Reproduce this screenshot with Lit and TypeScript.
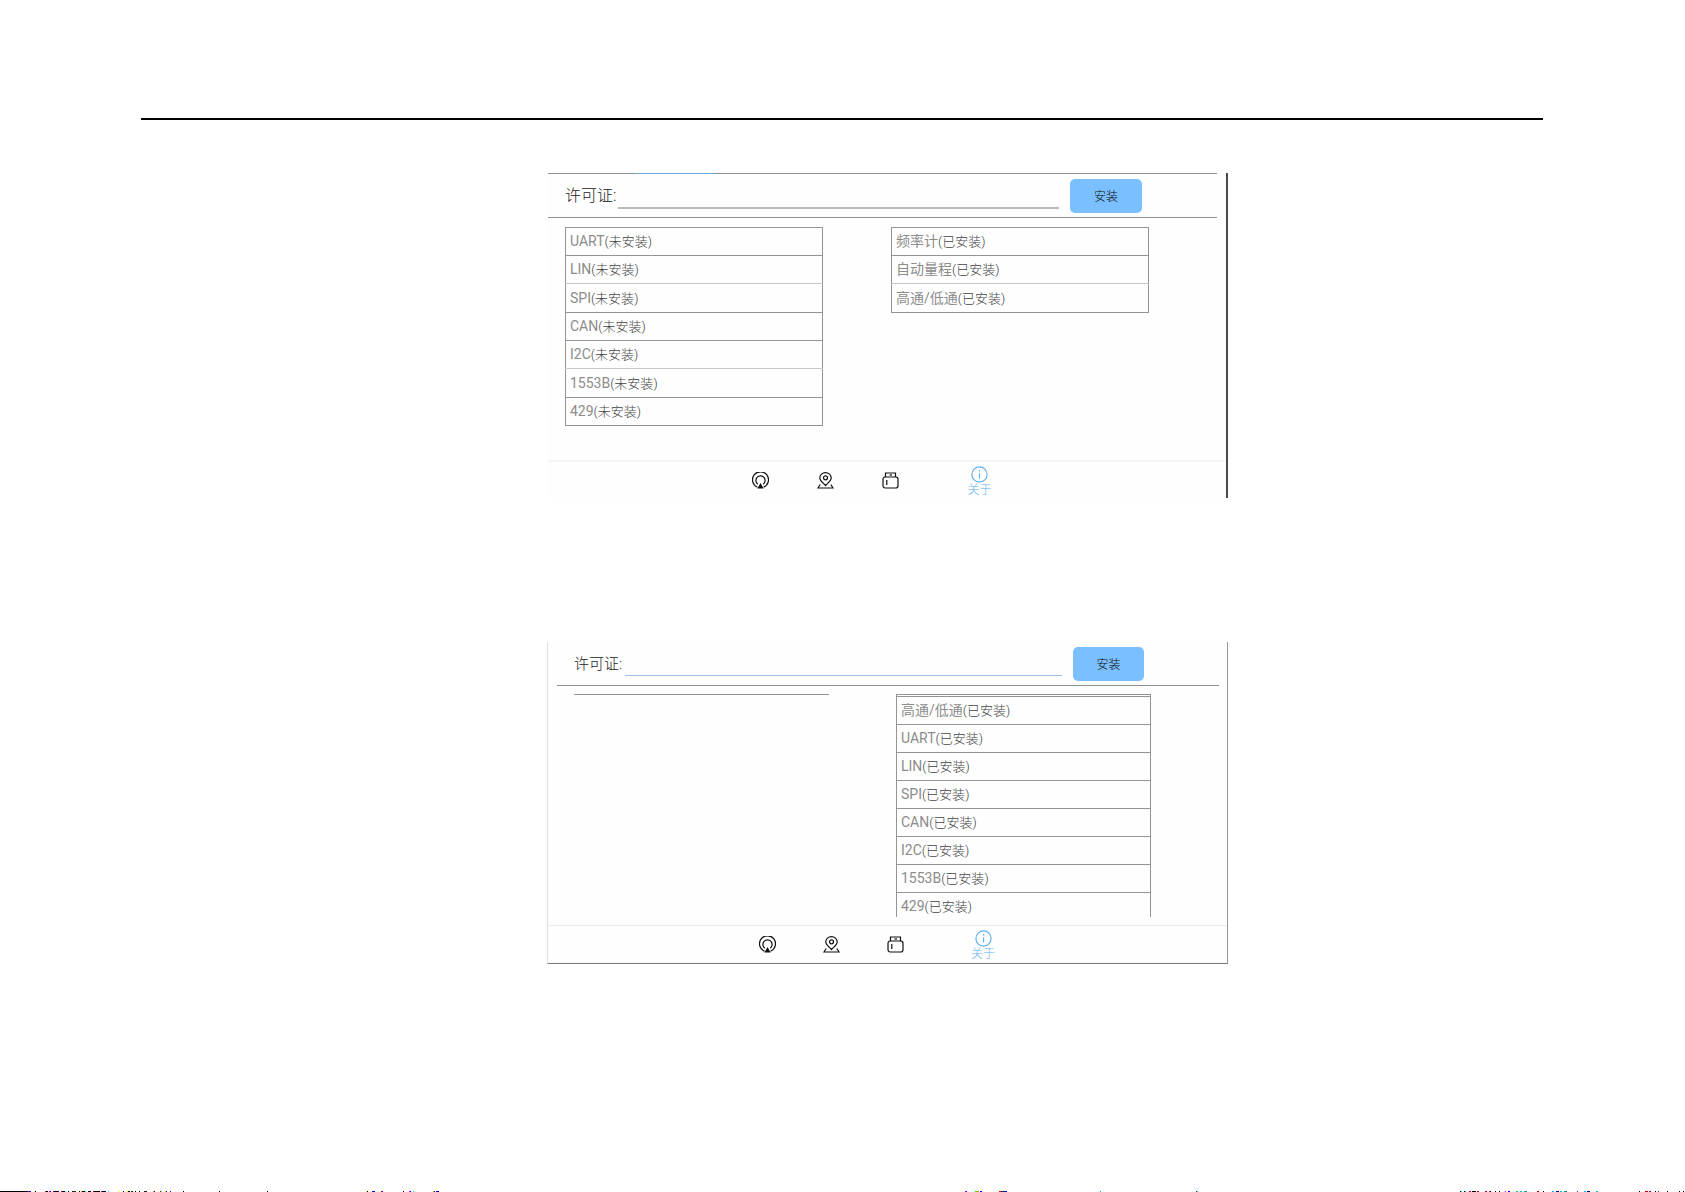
import { LitElement, html, svg, css } from "lit";
import { customElement, property } from "lit/decorators.js";
import { classMap } from "lit/directives/class-map.js";

type Item = { name: string; status: string };

const items = (names: string[], status: string): Item[] =>
  names.map((name) => ({ name, status }));

const BUSES = ["UART", "LIN", "SPI", "CAN", "I2C", "1553B", "429"];

const NAV_ICONS = [
  {
    label: "AirPlay",
    art: svg`<path d="M5.5 15.2A8 8 0 1 1 11.5 15.2" /><path d="M5.8 12.2A4.6 4.6 0 1 1 11.2 12.2" /><path d="M8.5 11 L11.6 16.5 H5.4Z" fill="currentColor" stroke="none" />`,
  },
  {
    label: "位置",
    art: svg`<path d="M8.5 13.5C6 10.8 2.8 8.6 2.8 5.9A5.6 5.2 0 0 1 14.2 5.9C14.2 8.6 11 10.8 8.5 13.5Z" /><circle cx="8.5" cy="5.8" r="2" /><path d="M3.2 12.5 L1 16 H16 L13.8 12.5" />`,
  },
  {
    label: "存储",
    art: svg`<path d="M3.5 5V1H13.5V5" /><path d="M7.5 3H10" /><rect x="1" y="5" width="15" height="11" rx="2.2" /><path d="M4.8 8V13" />`,
  },
];

@customElement("license-list")
class LicenseList extends LitElement {
  @property({ attribute: false }) items: Item[] = [];
  @property({ attribute: false }) faint: number[] = [];

  static styles = css`
    :host {
      display: block;
    }
    .list {
      width: 100%;
      border-collapse: collapse;
    }
    .cell {
      box-sizing: border-box;
      height: 28px;
      padding: 0 0 0 4px;
      border: 1px solid #949494;
      font: 14px/26px Roboto, "Noto Sans CJK SC", sans-serif;
      white-space: nowrap;
    }
    .faint .cell {
      border-bottom-color: #c8c8c8;
    }
    .after-faint .cell {
      border-top-color: #c8c8c8;
    }
    .tall .cell {
      height: 29px;
    }
    .name {
      color: #8c8c8c;
    }
    .status {
      font-size: 13px;
      font-weight: 300;
      color: #444;
    }
  `;

  render() {
    return html`<table class="list" aria-label="许可证">
      <tbody>
        ${this.items.map(
          (item, i) => html`<tr
            class=${classMap({
              faint: this.faint.includes(i),
              "after-faint": this.faint.includes(i - 1),
              tall: this.faint.includes(i - 1),
            })}
          >
            <td class="cell"><span class="name">${item.name}</span><span class="status">(${item.status})</span></td>
          </tr>`
        )}
      </tbody>
    </table>`;
  }
}

@customElement("license-panel")
class LicensePanel extends LitElement {
  @property({ reflect: true }) variant: "pending" | "installed" = "pending";
  @property({ attribute: false }) left: Item[] = [];
  @property({ attribute: false }) right: Item[] = [];

  static styles = css`
    :host {
      display: block;
    }
    :host([variant="installed"]) {
      margin-left: -1px;
    }
    .panel {
      box-sizing: border-box;
      background: #fefefe;
      font-family: Roboto, "Noto Sans CJK SC", sans-serif;
    }
    .pending {
      border-right: 2px solid #4b4b4b;
    }
    .installed {
      border: solid #999;
      border-width: 0 1px 1px;
      border-left-color: #e0e0e0;
      border-bottom-color: #777;
    }
    .bar {
      box-sizing: border-box;
      display: flex;
      align-items: flex-start;
      border-bottom: 1px solid #8f8f8f;
    }
    .pending .bar {
      height: 45px;
      margin-right: 9px;
      padding: 6px 75px 0 17px;
      background:
        linear-gradient(#6fa8dc, #6fa8dc) 87px 0 / 81px 1px no-repeat,
        linear-gradient(#8f8f8f, #8f8f8f) 0 0 / 100% 1px no-repeat;
    }
    .installed .bar {
      height: 44px;
      margin: 0 8px 0 9px;
      padding: 5px 75px 0 17px;
    }
    .label {
      width: 53px;
      font-size: 16px;
      font-weight: 300;
      line-height: 34px;
      color: #222;
      white-space: nowrap;
    }
    .installed .label {
      width: 51px;
      font-size: 15px;
    }
    .key {
      flex: 1;
      min-width: 0;
      box-sizing: border-box;
      height: 30px;
      padding: 0 4px;
      border: 0;
      border-bottom: 2px solid #bababa;
      border-radius: 0;
      outline: 0;
      background: transparent;
      font: inherit;
    }
    .installed .key {
      height: 29px;
      border-bottom: 1px solid #9ec3ea;
    }
    .install {
      width: 72px;
      height: 34px;
      margin-left: 11px;
      padding: 0;
      border: 0;
      border-radius: 5px;
      background: #7abfff;
      color: #111;
      font: 300 12px/34px "Noto Sans CJK SC", sans-serif;
    }
    .installed .install {
      width: 71px;
    }
    .body {
      box-sizing: border-box;
      display: grid;
      grid-template-columns: 1fr 1fr;
      align-items: start;
      gap: 68px;
      height: 242px;
      padding: 9px 77px 0 17px;
    }
    .installed .body {
      gap: 67px;
      height: 239px;
      padding: 8px 76px 0 26px;
    }
    .installed .scroll {
      box-sizing: border-box;
      border-top: 1px solid #949494;
      max-height: 223px;
      overflow: hidden;
    }
    .installed .filled {
      padding-top: 1px;
      background:
        linear-gradient(#949494, #949494) 0 0 / 1px 100% no-repeat,
        linear-gradient(#949494, #949494) 100% 0 / 1px 100% no-repeat;
    }
    .nav {
      box-sizing: border-box;
      display: flex;
      justify-content: center;
      height: 38px;
      padding-right: 34px;
      border-top: 2px solid #f6f6f6;
    }
    .installed .nav {
      padding-right: 25px;
      border-top: 1px solid #ececec;
    }
    .tab {
      display: flex;
      flex-direction: column;
      align-items: center;
      justify-content: center;
      width: 65px;
      padding: 0;
      border: 0;
      background: none;
      color: #111;
    }
    .installed .tab {
      width: 64px;
    }
    .about,
    .installed .about {
      margin-left: 24px;
      color: #5fb2f3;
      font: 300 12px/12px "Noto Sans CJK SC", sans-serif;
    }
    .icon {
      display: block;
      width: 17px;
      height: 17px;
      fill: none;
      stroke: currentColor;
      stroke-width: 1.2;
    }
  `;

  render() {
    const installed = this.variant === "installed";
    return html`<section class=${classMap({ panel: true, [this.variant]: true })}>
      <form class="bar" @submit=${(e: Event) => e.preventDefault()}>
        <label class="label" for="key">许可证:</label>
        <input class="key" id="key" type="text" />
        <button class="install" type="submit">安装</button>
      </form>
      <div class="body">
        <div class="scroll">
          ${this.left.length
            ? html`<license-list .items=${this.left} .faint=${[1, 4]}></license-list>`
            : ""}
        </div>
        <div class="scroll filled">
          <license-list .items=${this.right} .faint=${installed ? [] : [1]}></license-list>
        </div>
      </div>
      <nav class="nav">
        ${NAV_ICONS.map(
          (icon) => html`<button class="tab" type="button" aria-label=${icon.label}>
            <svg class="icon" viewBox="0 0 17 17">${icon.art}</svg>
          </button>`
        )}
        <button class="tab about" type="button">
          <svg class="icon" viewBox="0 0 17 17">
            <circle cx="8.5" cy="8.5" r="7.6" />
            <path d="M8.5 7.2V12.6M8.5 4V5.6" />
          </svg>
          关于
        </button>
      </nav>
    </section>`;
  }
}

/* Coloured ticks of the bottom edge: start, length, colour. */
const TICKS: [number, number, string][] = [
  [0, 28, "#000"], [28, 1, "#f00"], [29, 2, "#00f"], [34, 1, "#ff8"], [35, 1, "#000"],
  [45, 1, "#f00"], [46, 2, "#000"], [49, 1, "#f0f"], [50, 1, "#00f"], [53, 1, "#f00"],
  [54, 4, "#000"], [58, 1, "#00f"], [61, 1, "#f00"], [62, 3, "#000"], [65, 1, "#0ff"],
  [68, 1, "#000"], [72, 2, "#222"], [74, 2, "#040"], [79, 1, "#000"], [81, 1, "#f80"],
  [82, 3, "#000"], [85, 1, "#0ff"], [88, 3, "#000"], [93, 1, "#f00"], [94, 6, "#000"],
  [101, 1, "#f00"], [102, 3, "#000"], [105, 1, "#00f"], [108, 1, "#0ff"], [119, 1, "#ff0"],
  [123, 1, "#000"], [127, 1, "#ff0"], [128, 2, "#000"], [131, 2, "#040"], [135, 1, "#000"],
  [139, 1, "#000"], [144, 3, "#222"], [153, 1, "#f80"], [154, 1, "#00f"], [160, 1, "#f00"],
  [161, 1, "#0ff"], [165, 1, "#fd0"], [166, 1, "#00f"], [170, 1, "#00f"], [183, 1, "#000"],
  [219, 1, "#000"], [267, 1, "#000"], [366, 1, "#ff8"], [367, 1, "#000"], [372, 1, "#040"],
  [373, 2, "#00f"], [381, 1, "#f00"], [382, 1, "#00f"], [403, 1, "#000"], [409, 1, "#f0f"],
  [410, 1, "#00f"], [413, 1, "#0ff"], [433, 1, "#f80"], [434, 1, "#00f"], [436, 3, "#00a"],
  [965, 1, "#f0f"], [966, 1, "#00f"], [975, 2, "#0f0"], [977, 2, "#f80"], [980, 2, "#00f"],
  [999, 2, "#f00"], [1001, 3, "#040"], [1004, 3, "#00f"], [1100, 1, "#0cc"], [1196, 1, "#a00"],
  [1197, 1, "#0ff"], [1460, 1, "#000"], [1461, 1, "#0ff"], [1464, 1, "#000"], [1465, 1, "#0cc"],
  [1469, 2, "#a04"], [1472, 4, "#000"], [1477, 2, "#a00"], [1485, 2, "#a04"], [1489, 1, "#f0f"],
  [1490, 1, "#000"], [1495, 1, "#000"], [1499, 1, "#000"], [1505, 1, "#f0f"], [1508, 2, "#00f"],
  [1516, 2, "#0cc"], [1520, 2, "#0cc"], [1524, 3, "#0a8"], [1537, 2, "#a00"], [1543, 1, "#000"],
  [1552, 2, "#0cc"], [1556, 3, "#00a"], [1560, 2, "#0cc"], [1564, 3, "#088"], [1577, 1, "#80f"],
  [1584, 2, "#0cc"], [1587, 3, "#00a"], [1596, 2, "#0cc"], [1639, 1, "#000"], [1645, 3, "#a00"],
  [1649, 2, "#a04"], [1655, 1, "#000"], [1658, 1, "#80f"], [1667, 1, "#000"], [1679, 1, "#000"],
  [1683, 1, "#000"],
];

@customElement("app-root")
class AppRoot extends LitElement {
  static styles = css`
    :host {
      display: block;
    }
    .page {
      box-sizing: border-box;
      display: flex;
      flex-direction: column;
      min-height: 100vh;
      padding-top: 118px;
      background: #fff;
    }
    .sheet {
      display: grid;
      grid-template-columns: 407fr 680fr 315fr;
      row-gap: 144px;
      margin: 0 142px 0 141px;
      padding-top: 53px;
      border-top: 2px solid #000;
    }
    .figure {
      grid-column: 2;
      min-width: 0;
    }
    .edge {
      display: block;
      width: 100%;
      height: 1px;
      margin-top: auto;
    }
  `;

  render() {
    return html`<main class="page">
      <div class="sheet">
        <license-panel
          class="figure"
          variant="pending"
          .left=${items(BUSES, "未安装")}
          .right=${items(["频率计", "自动量程", "高通/低通"], "已安装")}
        ></license-panel>
        <license-panel
          class="figure"
          variant="installed"
          .right=${items(["高通/低通", ...BUSES], "已安装")}
        ></license-panel>
      </div>
      <svg class="edge" viewBox="0 0 1685 1" preserveAspectRatio="none" aria-hidden="true">
        ${TICKS.map(([x, w, c]) => svg`<rect x=${x} y="0" width=${w} height="1" fill=${c} />`)}
      </svg>
    </main>`;
  }
}
